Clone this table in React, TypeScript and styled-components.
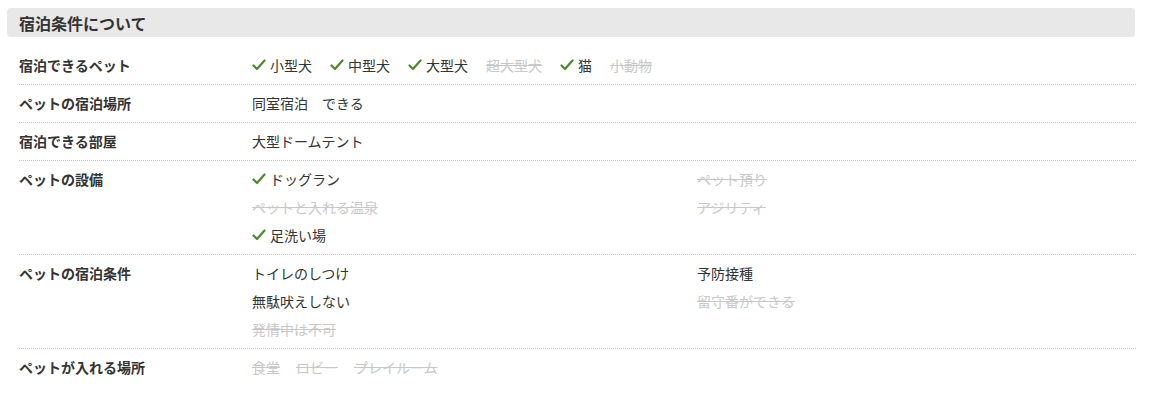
import React from 'react';
import styled, { createGlobalStyle } from 'styled-components';

const GlobalStyle = createGlobalStyle`
  body {
    margin: 0;
    background: #fff;
    font-family: "Noto Sans CJK JP", "Noto Sans", sans-serif;
    color: #333;
  }
`;

interface Item {
  label: string;
  ok: boolean;
  check?: boolean;
}

interface RowData {
  title: string;
  kind: 'inline' | 'grid' | 'text';
  gap?: number;
  items: Item[];
}

const rows: RowData[] = [
  {
    title: '宿泊できるペット',
    kind: 'inline',
    gap: 18,
    items: [
      { label: '小型犬', ok: true, check: true },
      { label: '中型犬', ok: true, check: true },
      { label: '大型犬', ok: true, check: true },
      { label: '超大型犬', ok: false },
      { label: '猫', ok: true, check: true },
      { label: '小動物', ok: false },
    ],
  },
  {
    title: 'ペットの宿泊場所',
    kind: 'text',
    items: [{ label: '同室宿泊　できる', ok: true }],
  },
  {
    title: '宿泊できる部屋',
    kind: 'text',
    items: [{ label: '大型ドームテント', ok: true }],
  },
  {
    title: 'ペットの設備',
    kind: 'grid',
    items: [
      { label: 'ドッグラン', ok: true, check: true },
      { label: 'ペット預り', ok: false },
      { label: 'ペットと入れる温泉', ok: false },
      { label: 'アジリティ', ok: false },
      { label: '足洗い場', ok: true, check: true },
    ],
  },
  {
    title: 'ペットの宿泊条件',
    kind: 'grid',
    items: [
      { label: 'トイレのしつけ', ok: true },
      { label: '予防接種', ok: true },
      { label: '無駄吠えしない', ok: true },
      { label: '留守番ができる', ok: false },
      { label: '発情中は不可', ok: false },
    ],
  },
  {
    title: 'ペットが入れる場所',
    kind: 'inline',
    gap: 16,
    items: [
      { label: '食堂', ok: false },
      { label: 'ロビー', ok: false },
      { label: 'プレイルーム', ok: false },
    ],
  },
];

const Page = styled.div`
  padding: 8px 14px 0 7px;
`;

const Heading = styled.h2`
  margin: 0 0 10px;
  height: 29px;
  padding: 0 12px;
  display: flex;
  align-items: center;
  background: #e8e8e8;
  border-radius: 4px;
  font-size: 16px;
  font-weight: bold;
  color: #333;
`;

const Table = styled.div`
  padding-left: 12px;
  margin-right: -1px;
`;

const Row = styled.div`
  display: grid;
  grid-template-columns: 233px 1fr;
  padding: 4px 0 5px;
  border-bottom: 1px dotted #c4c4c4;
  font-size: 14px;
  line-height: 28px;

  &:last-child {
    border-bottom: none;
  }
`;

const Label = styled.div`
  font-weight: bold;
  color: #333;
`;

const InlineList = styled.div<{ $gap: number }>`
  display: flex;
  flex-wrap: wrap;
  column-gap: ${(p) => p.$gap}px;
`;

const GridList = styled.div`
  display: grid;
  grid-template-columns: 445px 1fr;
`;

const Entry = styled.span<{ $ok: boolean }>`
  display: inline-flex;
  align-items: center;
  gap: 4px;
  color: ${(p) => (p.$ok ? '#333' : '#c8c8c8')};
  text-decoration: ${(p) => (p.$ok ? 'none' : 'line-through')};
`;

const Check = () => (
  <svg width="14" height="12" viewBox="0 0 14 12">
    <polyline
      points="1.5,6.5 5,10 12.5,1.5"
      fill="none"
      stroke="#4a8a2a"
      strokeWidth="2.2"
      strokeLinecap="round"
      strokeLinejoin="round"
    />
  </svg>
);

const Value = ({ row }: { row: RowData }) => {
  const entries = row.items.map((item) => (
    <Entry key={item.label} $ok={item.ok}>
      {item.check && <Check />}
      {item.label}
    </Entry>
  ));
  if (row.kind === 'grid') return <GridList>{entries}</GridList>;
  if (row.kind === 'inline') return <InlineList $gap={row.gap ?? 16}>{entries}</InlineList>;
  return <div>{entries}</div>;
};

export default function App() {
  return (
    <Page>
      <GlobalStyle />
      <Heading>宿泊条件について</Heading>
      <Table>
        {rows.map((row) => (
          <Row key={row.title}>
            <Label>{row.title}</Label>
            <Value row={row} />
          </Row>
        ))}
      </Table>
    </Page>
  );
}
